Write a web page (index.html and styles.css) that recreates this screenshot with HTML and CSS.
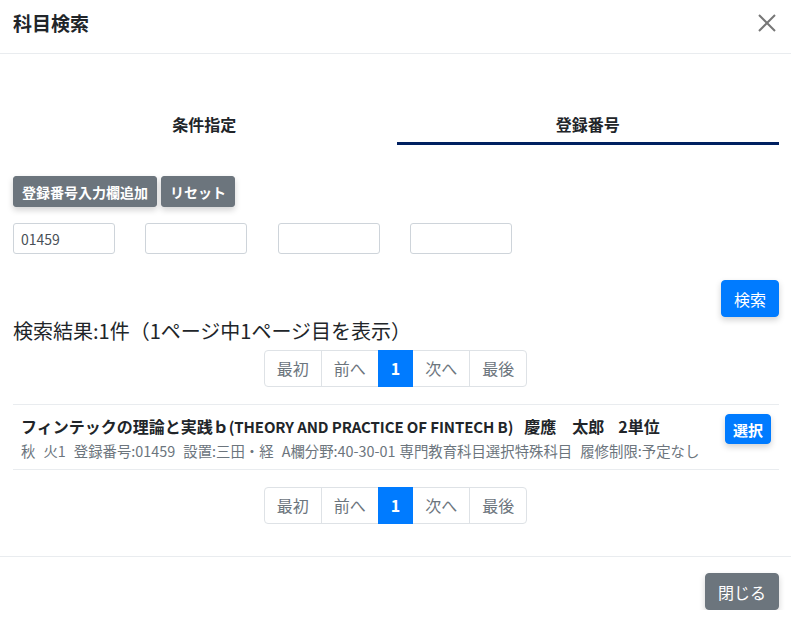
FILE: index.html
```html
<!DOCTYPE html>
<html lang="ja">
<head>
<meta charset="utf-8">
<title>科目検索</title>
<link rel="stylesheet" href="styles.css">
</head>
<body>
<div class="modal">
  <header class="modal-header">
    <h1 class="modal-title">科目検索</h1>
    <button class="close" aria-label="閉じる">
      <svg width="20" height="20" viewBox="0 0 20 20"><path d="M2 2 L18 18 M18 2 L2 18" stroke="#777" stroke-width="2" fill="none"/></svg>
    </button>
  </header>
  <div class="modal-body">
    <div class="tabs">
      <div class="tab">条件指定</div>
      <div class="tab active">登録番号</div>
    </div>
    <div class="tool-buttons">
      <button class="btn btn-gray">登録番号入力欄追加</button>
      <button class="btn btn-gray">リセット</button>
    </div>
    <div class="inputs">
      <input class="field" type="text" value="01459">
      <input class="field" type="text" value="">
      <input class="field" type="text" value="">
      <input class="field" type="text" value="">
    </div>
    <div class="search-row">
      <button class="btn btn-blue btn-search">検索</button>
    </div>
    <div class="result-count">検索結果:1件（1ページ中1ページ目を表示）</div>
    <nav class="pager">
      <span class="page">最初</span><span class="page">前へ</span><span class="page current">1</span><span class="page">次へ</span><span class="page">最後</span>
    </nav>
    <div class="result">
      <div class="result-text">
        <div class="result-title"><span class="gap-l">フィンテックの理論と実践ｂ<span class="latin">(THEORY AND PRACTICE OF FINTECH B)</span></span><span class="gap-m">慶應　太郎</span><span>2単位</span></div>
        <div class="result-meta"><span class="gap">秋</span><span class="gap">火1</span><span class="gap">登録番号:01459</span><span class="gap">設置:三田・経</span><span class="gap-s">A欄分野:40-30-01</span><span class="gap">専門教育科目選択特殊科目</span><span>履修制限:予定なし</span></div>
      </div>
      <button class="btn btn-blue btn-select">選択</button>
    </div>
    <nav class="pager pager-bottom">
      <span class="page">最初</span><span class="page">前へ</span><span class="page current">1</span><span class="page">次へ</span><span class="page">最後</span>
    </nav>
  </div>
  <footer class="modal-footer">
    <button class="btn btn-gray btn-close">閉じる</button>
  </footer>
</div>
</body>
</html>
```

FILE: styles.css
```css
* { box-sizing: border-box; }
html, body { margin: 0; padding: 0; background: #fff; }
body {
  font-family: "Noto Sans CJK JP", "Noto Sans", sans-serif;
  color: #212529;
  width: 791px;
}
.modal { width: 791px; }
.modal-header {
  height: 54px;
  display: flex;
  align-items: center;
  justify-content: space-between;
  padding: 0 14px 0 13px;
  border-bottom: 1px solid #e9ecef;
}
.modal-title {
  margin: 0;
  font-size: 19px;
  font-weight: 700;
  line-height: 24px;
  margin-top: -7px;
}
.close {
  border: 0;
  background: none;
  padding: 0;
  width: 20px;
  height: 20px;
  margin-top: -8px;
  display: flex;
}
.modal-body { padding: 0 12px 0 13px; }
.tabs {
  display: flex;
  margin-top: 46px;
}
.tab {
  flex: 1;
  text-align: center;
  font-size: 16px;
  font-weight: 700;
  line-height: 24px;
  padding: 12px 0 6px;
  border-bottom: 3px solid transparent;
}
.tab.active { border-bottom-color: #002060; margin-left: 1px; }
.btn {
  font-family: inherit;
  border: 1px solid transparent;
  border-radius: 4px;
  color: #fff;
  cursor: pointer;
}
.btn-gray { background: #6c757d; border-color: #6c757d; }
.btn-blue { background: #007bff; border-color: #007bff; }
.tool-buttons {
  display: flex;
  gap: 4px;
  margin-top: 31px;
}
.tool-buttons .btn {
  height: 31px;
  font-size: 14px;
  font-weight: 700;
  padding: 0 8px;
  box-shadow: 0 3px 6px rgba(0,0,0,0.18);
  border-radius: 3px;
}
.inputs {
  display: flex;
  gap: 30.3px;
  margin-top: 16px;
}
.field {
  width: 102px;
  height: 31px;
  border: 1px solid #ced4da;
  border-radius: 3px;
  padding: 0 7px;
  font-family: inherit;
  font-size: 14px;
  color: #495057;
}
.search-row {
  display: flex;
  justify-content: flex-end;
  margin-top: 26px;
}
.btn-search {
  height: 37px;
  width: 58px;
  font-size: 16px;
  padding: 0;
  box-shadow: 0 3px 6px rgba(0,0,0,0.18);
}
.result-count {
  font-size: 20px;
  line-height: 27px;
  margin-top: 0;
}
.pager {
  display: flex;
  justify-content: center;
  margin-top: 6px;
  margin-left: -1px;
}
.page {
  height: 37px;
  line-height: 35px;
  padding: 0 12px;
  font-size: 16px;
  color: #6c757d;
  border: 1px solid #dee2e6;
  margin-left: -1px;
}
.page:first-child { border-radius: 4px 0 0 4px; margin-left: 0; }
.page:last-child { border-radius: 0 4px 4px 0; }
.page.current {
  background: #007bff;
  border-color: #007bff;
  color: #fff;
  font-weight: 700;
  position: relative;
}
.result {
  display: flex;
  justify-content: space-between;
  align-items: flex-start;
  margin-top: 17px;
  border-top: 1px solid #e9ecef;
  border-bottom: 1px solid #e9ecef;
  height: 66px;
  padding: 8px 8px 0 8px;
}
.result-title {
  font-size: 16px;
  font-weight: 700;
  line-height: 24px;
  margin-top: 1px;
}
.latin { font-size: 15px; letter-spacing: -0.1px; }
.result-meta {
  font-size: 14.4px;
  color: #6c757d;
  line-height: 20px;
  margin-top: 2px;
}
.gap { margin-right: 8px; }
.gap-s { margin-right: 4px; }
.gap-l { margin-right: 11px; }
.gap-m { margin-right: 14px; }
.btn-select {
  height: 30px;
  width: 46px;
  padding: 0;
  font-size: 15px;
  font-weight: 700;
  box-shadow: 0 3px 6px rgba(0,0,0,0.18);
  margin-top: 1px;
}
.pager-bottom { margin-top: 17px; }
.modal-footer {
  margin-top: 32px;
  border-top: 1px solid #e9ecef;
  display: flex;
  justify-content: flex-end;
  padding: 16px 12px 0;
}
.btn-close {
  height: 37px;
  width: 74px;
  font-size: 16px;
  padding: 0;
  box-shadow: 0 3px 6px rgba(0,0,0,0.18);
}
```
